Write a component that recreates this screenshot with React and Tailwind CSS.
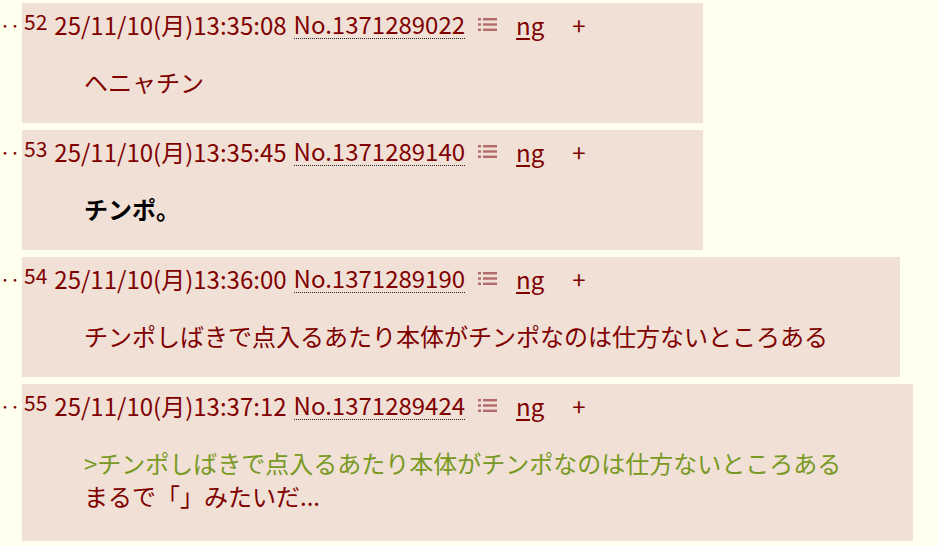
import React from 'react';

const posts = [
  { n: 52, date: '25/11/10(月)13:35:08', no: '1371289022', body: [{ t: 'ヘニャチン' }] },
  { n: 53, date: '25/11/10(月)13:35:45', no: '1371289140', body: [{ t: 'チンポ。', bold: true }] },
  { n: 54, date: '25/11/10(月)13:36:00', no: '1371289190', body: [{ t: 'チンポしばきで点入るあたり本体がチンポなのは仕方ないところある' }] },
  {
    n: 55,
    date: '25/11/10(月)13:37:12',
    no: '1371289424',
    body: [{ t: '>チンポしばきで点入るあたり本体がチンポなのは仕方ないところある', quote: true }, { t: 'まるで「」みたいだ...' }],
  },
];

const ListIcon = () => (
  <svg width="19" height="15" viewBox="0 0 19 15" className="inline-block">
    <g fill="#b46a6a">
      <rect x="0" y="1" width="3" height="2.4" />
      <rect x="0" y="6.3" width="3" height="2.4" />
      <rect x="0" y="11.6" width="3" height="2.4" />
      <rect x="5" y="1" width="14" height="2.4" />
      <rect x="5" y="6.3" width="14" height="2.4" />
      <rect x="5" y="11.6" width="14" height="2.4" />
    </g>
  </svg>
);

const Post = ({ n, date, no, body }) => (
  <div className="flex items-start">
    <div className="w-[22px] pt-[5px] leading-[36px] text-[#800000] text-[20px]">‥</div>
    <div className="bg-[#f0e0d6] min-w-[681px] pt-[5px] pb-[25px] pl-[2px] pr-[72px]">
      {/* header */}
      <div className="flex items-center h-[33px] whitespace-nowrap text-[#800000]">
        <span className="text-[21px] self-start leading-[26px]">{n}</span>
        <span className="ml-[7px]">{date}</span>
        <span className="ml-[7px] border-b border-dotted border-[#222] leading-[28px]">No.{no}</span>
        <span className="ml-[13px] flex items-center"><ListIcon /></span>
        <span className="ml-[19px] underline underline-offset-[3px]">ng</span>
        <span className="ml-[28px]">+</span>
      </div>
      {/* body */}
      <div className={'mt-[24px] ml-[60px] ' + (body.length > 1 ? 'pb-[4px]' : '')}>
        {body.map((l, i) => (
          <div
            key={i}
            className={
              'leading-[33px] whitespace-nowrap ' +
              (l.quote ? 'text-[#789922]' : l.bold ? 'font-bold text-black' : 'text-[#800000]')
            }
          >
            {l.t}
          </div>
        ))}
      </div>
    </div>
  </div>
);

export default function App() {
  return (
    <div
      className="min-h-screen bg-[#ffffee] pt-[3px] flex flex-col gap-[7px] text-[24px]"
      style={{ fontFamily: '"Noto Sans CJK JP", "Noto Sans", sans-serif' }}
    >
      {posts.map((p) => (
        <Post key={p.n} {...p} />
      ))}
    </div>
  );
}
